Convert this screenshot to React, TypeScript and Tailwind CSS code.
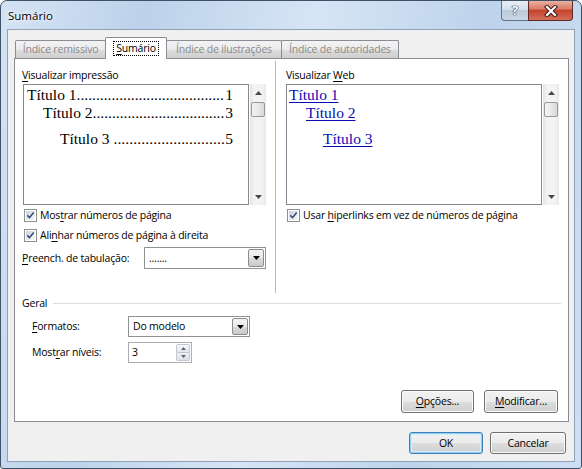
import React from "react";

function U({ children }: { children: React.ReactNode }) {
  return <span className="underline decoration-1 underline-offset-[2px]">{children}</span>;
}

function Check() {
  return (
    <div className="w-[13px] h-[13px] shrink-0 border border-[#8e8f8f] bg-white p-px">
      <div className="w-full h-full bg-[linear-gradient(135deg,#c9ced6_0%,#e9ebee_60%,#f7f7f7_100%)] flex items-center justify-center">
        <svg width="11" height="11" viewBox="0 0 11 11" className="block">
          <path d="M1.6 5.4 L4.3 8.1 L9.4 1.9" fill="none" stroke="#35487a" strokeWidth="1.9" strokeLinejoin="miter" />
        </svg>
      </div>
    </div>
  );
}

function Arrow({ up }: { up?: boolean }) {
  return (
    <svg width="7" height="4" viewBox="0 0 7 4" className="block">
      {up ? <polygon points="0,4 3.5,0 7,4" fill="#4a4a4a" /> : <polygon points="0,0 7,0 3.5,4" fill="#4a4a4a" />}
    </svg>
  );
}

function VScroll() {
  return (
    <div className="w-[16px] h-full flex flex-col bg-[linear-gradient(90deg,#e3e3e3_0%,#f3f3f3_25%,#f3f3f3_75%,#e8e8e8_100%)]">
      <div className="h-[17px] flex items-center justify-center">
        <Arrow up />
      </div>
      <div className="mt-px mx-px h-[15px] rounded-[2px] border border-[#989898] bg-[linear-gradient(90deg,#f4f4f4_0%,#e8e8e8_50%,#d8d8d8_100%)]" />
      <div className="flex-1" />
      <div className="h-[17px] flex items-center justify-center">
        <Arrow />
      </div>
    </div>
  );
}

function Combo({ value, h }: { value: string; h: string }) {
  return (
    <div className={`w-[122px] ${h} flex border border-[#8f9296] bg-white`}>
      <div className="flex-1 pl-[4px] flex items-center">{value}</div>
      <div className="w-[16px] my-px mr-px rounded-[2px] border border-[#8c8c8c] bg-[linear-gradient(180deg,#f2f2f2_0%,#ebebeb_50%,#d9d9d9_51%,#cbcbcb_100%)] flex items-center justify-center">
        <svg width="7" height="4" viewBox="0 0 7 4" className="block">
          <polygon points="0,0 7,0 3.5,4" fill="#000" />
        </svg>
      </div>
    </div>
  );
}

function Btn({ children, w, h, def }: { children: React.ReactNode; w: string; h: string; def?: boolean }) {
  return (
    <div
      className={
        def
          ? `${w} ${h} rounded-[3px] border border-[#3c7fb1] bg-[linear-gradient(180deg,#f2f2f2_0%,#ebebeb_50%,#dddddd_51%,#cfcfcf_100%)] shadow-[inset_0_0_0_1px_#8fcff5,inset_0_0_1px_2px_#d6eefc] flex items-center justify-center`
          : `${w} ${h} rounded-[3px] border border-[#707070] bg-[linear-gradient(180deg,#f2f2f2_0%,#ebebeb_50%,#dddddd_51%,#cfcfcf_100%)] shadow-[inset_0_0_0_1px_#fbfbfb] flex items-center justify-center`
      }
    >
      {children}
    </div>
  );
}

const D1 = "......................................";
const D2 = "..................................";
const D3 = "............................";

export default function App() {
  return (
    <div className="w-[582px] h-[469px] flex flex-col rounded-t-[7px] rounded-b-[3px] border border-[#3f5166] bg-[linear-gradient(100deg,#d4e3f4_0%,#bcd2ea_22%,#d6e5f5_48%,#bdd3eb_74%,#cde0f2_100%)] overflow-hidden font-['Open_Sans',sans-serif] text-black select-none">
      {/* Title bar */}
      <div className="h-[28px] shrink-0 flex items-start">
        <div className="pl-[7px] pt-[7px] text-[11.5px] leading-[15px] [text-shadow:0_0_6px_#ffffff,0_0_3px_#ffffff]">Sumário</div>
        <div className="flex-1" />
        <div className="flex mr-[8px]">
          <div className="w-[27px] h-[20px] rounded-bl-[4px] border border-t-0 border-r-0 border-[#5f7186] bg-[linear-gradient(180deg,#e8eef5_0%,#d5dfea_45%,#bccbdb_50%,#cad7e5_100%)] flex items-center justify-center">
            <span className="text-[13px] leading-[13px] font-bold text-white [text-shadow:0_0_1px_#27374a,0_0_1px_#27374a,0_0_1px_#27374a]">?</span>
          </div>
          <div className="w-[45px] h-[20px] rounded-br-[4px] border border-t-0 border-[#5e2a22] bg-[linear-gradient(180deg,#eab0a2_0%,#d97b66_42%,#c5432d_50%,#d46f5a_100%)] flex items-center justify-center">
            <svg width="14" height="12" viewBox="0 0 14 12" className="block">
              <path d="M3 2 L11 10 M11 2 L3 10" stroke="#3b1a16" strokeWidth="4.2" strokeLinecap="square" />
              <path d="M3 2 L11 10 M11 2 L3 10" stroke="#ffffff" strokeWidth="2.2" strokeLinecap="square" />
            </svg>
          </div>
        </div>
      </div>

      {/* Client area */}
      <div className="flex-1 mx-[6px] mb-[6px] border border-[#8ea2ba] bg-[#f0f0f0] flex flex-col pt-[7px] pl-[6px] pr-[5px] pb-[7px] text-[10.5px] leading-[15px] tracking-[-0.2px]">
        {/* Tabs */}
        <div className="h-[21px] shrink-0 flex items-end pl-[1px]">
          <div className="w-[91px] h-[18px] rounded-t-[2px] border border-b-0 border-[#898c95] bg-[linear-gradient(180deg,#f3f3f3_0%,#ebebeb_50%,#dddddd_51%,#cfcfcf_100%)] text-[#8a8a8a] flex items-center justify-center">
            Índice remissivo
          </div>
          <div className="-ml-px -mb-px relative z-10 w-[62px] h-[22px] rounded-t-[2px] border border-b-0 border-[#898c95] bg-white flex items-center justify-center">
            <span className="border border-dotted border-black px-[2px] leading-[13px]">
              <U>S</U>umário
            </span>
          </div>
          <div className="-ml-px w-[116px] h-[18px] rounded-t-[2px] border border-b-0 border-[#898c95] bg-[linear-gradient(180deg,#f3f3f3_0%,#ebebeb_50%,#dddddd_51%,#cfcfcf_100%)] text-[#8a8a8a] flex items-center justify-center">
            Índice de ilustrações
          </div>
          <div className="-ml-px w-[118px] h-[18px] rounded-t-[2px] border border-b-0 border-[#898c95] bg-[linear-gradient(180deg,#f3f3f3_0%,#ebebeb_50%,#dddddd_51%,#cfcfcf_100%)] text-[#8a8a8a] flex items-center justify-center">
            Índice de autoridades
          </div>
        </div>

        {/* Tab panel */}
        <div className="flex-1 border border-[#898c95] bg-white flex flex-col pl-[7px] pr-[7px] pt-[2px] pb-[8px]">
          <div className="h-[232px] shrink-0 flex">
            {/* Left column */}
            <div className="w-[244px] pt-[7px] flex flex-col">
              <div className="h-[15px] mb-px">
                <U>V</U>isualizar impressão
              </div>
              <div className="h-[121px] flex ml-px">
                <div className="w-[226px] border border-[#828790] bg-white pl-[3px] pr-[15px] pt-px font-['Liberation_Serif',serif] text-[15.5px] leading-[18px] tracking-normal text-black">
                  <div className="flex justify-between whitespace-nowrap">
                    <span>Título 1</span>
                    <span className="flex-1 min-w-0 overflow-hidden">{D1}</span>
                    <span>1</span>
                  </div>
                  <div className="flex justify-between whitespace-nowrap pl-[16px]">
                    <span>Título 2</span>
                    <span className="flex-1 min-w-0 overflow-hidden">{D2}</span>
                    <span>3</span>
                  </div>
                  <div className="flex justify-between whitespace-nowrap pl-[33px] mt-[8px]">
                    <span>Título 3&nbsp;</span>
                    <span className="flex-1 min-w-0 overflow-hidden tracking-[0.11px]">{D3}</span>
                    <span>5</span>
                  </div>
                </div>
                <div className="ml-px">
                  <VScroll />
                </div>
              </div>
              <div className="h-[20px] flex items-center pl-[2px] gap-[3px]">
                <Check />
                <span>
                  Mos<U>t</U>rar números de página
                </span>
              </div>
              <div className="h-[20px] flex items-center pl-[2px] gap-[3px]">
                <Check />
                <span>
                  Ali<U>n</U>har números de página à direita
                </span>
              </div>
              <div className="mt-[2px] h-[22px] flex items-center justify-between">
                <span>
                  <U>P</U>reench. de tabulação:
                </span>
                <Combo value="......." h="h-[22px]" />
              </div>
            </div>

            <div className="ml-[9px] w-px bg-[#b9b9b9]" />

            {/* Right column */}
            <div className="ml-[10px] w-[273px] pt-[7px] flex flex-col">
              <div className="h-[15px] mb-px">
                Visualizar <U>W</U>eb
              </div>
              <div className="h-[121px] flex">
                <div className="w-[256px] border border-[#828790] bg-white pl-[2px] pt-px font-['Liberation_Serif',serif] text-[15.5px] leading-[18px] tracking-normal text-[#0a0ab4]">
                  <div className="whitespace-nowrap">
                    <span className="underline decoration-1 underline-offset-[2px]">Título 1</span>
                  </div>
                  <div className="whitespace-nowrap pl-[17px]">
                    <span className="underline decoration-1 underline-offset-[2px]">Título 2</span>
                  </div>
                  <div className="whitespace-nowrap pl-[34px] mt-[8px]">
                    <span className="underline decoration-1 underline-offset-[2px]">Título 3</span>
                  </div>
                </div>
                <div className="ml-px">
                  <VScroll />
                </div>
              </div>
              <div className="h-[20px] flex items-center pl-px gap-[3px]">
                <Check />
                <span>
                  Usar <U>h</U>iperlinks em vez de números de página
                </span>
              </div>
            </div>
          </div>

          {/* Geral */}
          <div className="mt-[3px] h-[15px] flex items-center">
            <span>Geral</span>
            <div className="flex-1 ml-[6px] h-px bg-[#d5dfe5]" />
          </div>
          <div className="mt-[5px] h-[21px] flex items-center pl-[10px]">
            <span className="w-[96px]">
              <U>F</U>ormatos:
            </span>
            <Combo value="Do modelo" h="h-[21px]" />
          </div>
          <div className="mt-[5px] h-[21px] flex items-center pl-[10px]">
            <span className="w-[96px]">
              Most<U>r</U>ar níveis:
            </span>
            <div className="w-[64px] h-[21px] flex border border-[#abadb3] bg-white">
              <div className="flex-1 pl-[3px] flex items-center">3</div>
              <div className="w-[15px] py-px pr-px flex flex-col gap-0">
                <div className="flex-1 border border-[#c3c8d0] rounded-t-[2px] bg-[linear-gradient(180deg,#f7f8fa,#e3e7ec)] flex items-center justify-center">
                  <svg width="5" height="3" viewBox="0 0 5 3" className="block">
                    <polygon points="0,3 2.5,0 5,3" fill="#56657e" />
                  </svg>
                </div>
                <div className="flex-1 border border-t-0 border-[#c3c8d0] rounded-b-[2px] bg-[linear-gradient(180deg,#eef0f3,#dde2e8)] flex items-center justify-center">
                  <svg width="5" height="3" viewBox="0 0 5 3" className="block">
                    <polygon points="0,0 5,0 2.5,3" fill="#56657e" />
                  </svg>
                </div>
              </div>
            </div>
          </div>

          <div className="flex-1" />

          <div className="flex justify-end gap-[10px] pr-[3px]">
            <Btn w="w-[73px]" h="h-[23px]">
              <span>
                <U>O</U>pções...
              </span>
            </Btn>
            <Btn w="w-[74px]" h="h-[23px]">
              <span>
                <U>M</U>odificar...
              </span>
            </Btn>
          </div>
        </div>

        {/* Bottom buttons */}
        <div className="mt-[10px] flex justify-end gap-[7px] pr-[3px]">
          <Btn w="w-[74px]" h="h-[22px]" def>
            OK
          </Btn>
          <Btn w="w-[76px]" h="h-[22px]">
            Cancelar
          </Btn>
        </div>
      </div>
    </div>
  );
}
